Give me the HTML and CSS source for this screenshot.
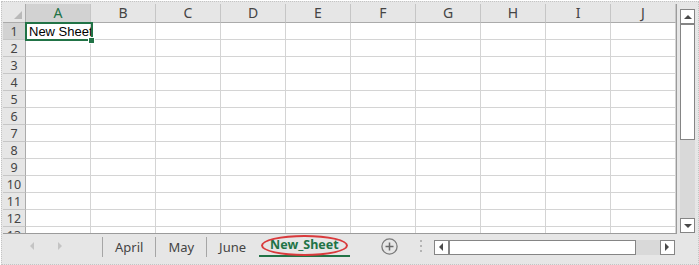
FILE: index.html
```html
<!DOCTYPE html>
<html lang="en">
<head>
  <meta charset="UTF-8">
  <title>New_Sheet</title>
  <link rel="stylesheet" href="styles.css">
</head>
<body>
<div class="frame">
  <div class="main">
    <div class="grid">
      <div class="corner"></div>
      <div class="ch active">A</div><div class="ch">B</div><div class="ch">C</div><div class="ch">D</div><div class="ch">E</div><div class="ch">F</div><div class="ch">G</div><div class="ch">H</div><div class="ch">I</div><div class="ch">J</div>
      <div class="rh active">1</div><div class="c sel">New Sheet</div><div class="c"></div><div class="c"></div><div class="c"></div><div class="c"></div><div class="c"></div><div class="c"></div><div class="c"></div><div class="c"></div><div class="c"></div>
      <div class="rh">2</div><div class="c"></div><div class="c"></div><div class="c"></div><div class="c"></div><div class="c"></div><div class="c"></div><div class="c"></div><div class="c"></div><div class="c"></div><div class="c"></div>
      <div class="rh">3</div><div class="c"></div><div class="c"></div><div class="c"></div><div class="c"></div><div class="c"></div><div class="c"></div><div class="c"></div><div class="c"></div><div class="c"></div><div class="c"></div>
      <div class="rh">4</div><div class="c"></div><div class="c"></div><div class="c"></div><div class="c"></div><div class="c"></div><div class="c"></div><div class="c"></div><div class="c"></div><div class="c"></div><div class="c"></div>
      <div class="rh">5</div><div class="c"></div><div class="c"></div><div class="c"></div><div class="c"></div><div class="c"></div><div class="c"></div><div class="c"></div><div class="c"></div><div class="c"></div><div class="c"></div>
      <div class="rh">6</div><div class="c"></div><div class="c"></div><div class="c"></div><div class="c"></div><div class="c"></div><div class="c"></div><div class="c"></div><div class="c"></div><div class="c"></div><div class="c"></div>
      <div class="rh">7</div><div class="c"></div><div class="c"></div><div class="c"></div><div class="c"></div><div class="c"></div><div class="c"></div><div class="c"></div><div class="c"></div><div class="c"></div><div class="c"></div>
      <div class="rh">8</div><div class="c"></div><div class="c"></div><div class="c"></div><div class="c"></div><div class="c"></div><div class="c"></div><div class="c"></div><div class="c"></div><div class="c"></div><div class="c"></div>
      <div class="rh">9</div><div class="c"></div><div class="c"></div><div class="c"></div><div class="c"></div><div class="c"></div><div class="c"></div><div class="c"></div><div class="c"></div><div class="c"></div><div class="c"></div>
      <div class="rh">10</div><div class="c"></div><div class="c"></div><div class="c"></div><div class="c"></div><div class="c"></div><div class="c"></div><div class="c"></div><div class="c"></div><div class="c"></div><div class="c"></div>
      <div class="rh">11</div><div class="c"></div><div class="c"></div><div class="c"></div><div class="c"></div><div class="c"></div><div class="c"></div><div class="c"></div><div class="c"></div><div class="c"></div><div class="c"></div>
      <div class="rh">12</div><div class="c"></div><div class="c"></div><div class="c"></div><div class="c"></div><div class="c"></div><div class="c"></div><div class="c"></div><div class="c"></div><div class="c"></div><div class="c"></div>
      <div class="rh">13</div><div class="c"></div><div class="c"></div><div class="c"></div><div class="c"></div><div class="c"></div><div class="c"></div><div class="c"></div><div class="c"></div><div class="c"></div><div class="c"></div>
    </div>
    <div class="vscroll">
      <div class="sbtn"><span class="tri up"></span></div>
      <div class="thumb"></div>
      <div class="track"></div>
      <div class="sbtn"><span class="tri down"></span></div>
    </div>
  </div>
  <div class="tabbar">
    <div class="nav"><span class="tri left faint"></span><span class="tri right faint"></span></div>
    <div class="tab">April</div>
    <div class="tab">May</div>
    <div class="tab">June</div>
    <div class="tab current">New_Sheet</div>
    <div class="add">
      <svg width="17" height="17" viewBox="0 0 17 17">
        <circle cx="8.5" cy="8.5" r="7.6" fill="none" stroke="#7a7a7a" stroke-width="1.3"/>
        <path d="M8.5 4.5v8M4.5 8.5h8" stroke="#6a6a6a" stroke-width="1.5"/>
      </svg>
    </div>
    <div class="grip"><i></i><i></i><i></i></div>
    <div class="hscroll">
      <div class="sbtn"><span class="tri left"></span></div>
      <div class="thumb"></div>
      <div class="track"></div>
      <div class="sbtn"><span class="tri right"></span></div>
    </div>
  </div>
</div>
</body>
</html>
```

FILE: styles.css
```css
body {
  margin: 0;
  background-color: #ffffff;
  font-family: "Noto Sans", "Open Sans", sans-serif;
}

.frame {
  margin: 1px;
  width: 695px;
  height: 260px;
  border: 1px dotted #c4c4c4;
  background-color: #e6e6e6;
  padding: 2px 0 0 1px;
  box-sizing: content-box;
}

.main {
  display: flex;
  height: 230px;
}

/* hoja */
.grid {
  display: grid;
  grid-template-columns: 23px repeat(10, 65px);
  grid-template-rows: 19px repeat(13, 17px);
  width: 674px;
  height: 230px;
  background-color: #ffffff;
  border-right: 1px solid #9b9b9b;
  border-bottom: 1px solid #9b9b9b;
  box-sizing: border-box;
  overflow: hidden;
}

.grid > div {
  box-sizing: border-box;
}

.corner {
  position: relative;
  background-color: #e6e6e6;
  border-right: 1px solid #ababab;
  border-bottom: 1px solid #ababab;
}

.corner::after {
  content: "";
  position: absolute;
  right: 3px;
  bottom: 3px;
  border-left: 8px solid transparent;
  border-bottom: 8px solid #b9b9b9;
}

.ch {
  background-color: #e6e6e6;
  border-right: 1px solid #c6c6c6;
  border-bottom: 1px solid #ababab;
  color: #444444;
  font-size: 14px;
  line-height: 18px;
  text-align: center;
}

.rh {
  background-color: #e6e6e6;
  border-right: 1px solid #ababab;
  border-bottom: 1px solid #c6c6c6;
  color: #444444;
  font-size: 12.5px;
  line-height: 17px;
  text-align: center;
}

.ch.active {
  background-color: #d2d2d2;
  color: #217346;
}

.rh.active {
  background-color: #d2d2d2;
}

.c {
  border-right: 1px solid #d4d4d4;
  border-bottom: 1px solid #d4d4d4;
  font-family: "Liberation Sans", Arial, sans-serif;
  font-size: 13px;
  line-height: 17px;
  white-space: nowrap;
}

.sel {
  position: relative;
  padding-left: 3px;
  z-index: 1;
}

.sel::before {
  content: "";
  position: absolute;
  top: -1px;
  left: -1px;
  right: -3px;
  bottom: -2px;
  border: 2px solid #217346;
}

.sel::after {
  content: "";
  position: absolute;
  right: -5px;
  bottom: -5px;
  width: 5px;
  height: 5px;
  background-color: #217346;
  border: 1px solid #ffffff;
}

/* barras de desplazamiento */
.vscroll {
  display: flex;
  flex-direction: column;
  width: 15px;
  height: 224px;
  margin: 5px 0 0 3px;
}

.vscroll .sbtn {
  height: 15px;
}

.vscroll .thumb {
  height: 116px;
}

.vscroll .track {
  flex: 1;
  background-color: #d9d9d9;
}

.sbtn, .thumb {
  display: flex;
  align-items: center;
  justify-content: center;
  background-color: #ffffff;
  border: 1px solid #858585;
  box-sizing: border-box;
}

.tri {
  width: 0;
  height: 0;
}

.tri.up {
  border-left: 4px solid transparent;
  border-right: 4px solid transparent;
  border-bottom: 4px solid #4a4a4a;
}

.tri.down {
  border-left: 4px solid transparent;
  border-right: 4px solid transparent;
  border-top: 4px solid #4a4a4a;
}

.tri.left {
  border-top: 4px solid transparent;
  border-bottom: 4px solid transparent;
  border-right: 4px solid #4a4a4a;
}

.tri.right {
  border-top: 4px solid transparent;
  border-bottom: 4px solid transparent;
  border-left: 4px solid #4a4a4a;
}

.tri.faint.left {
  border-right-color: #c4c4c4;
}

.tri.faint.right {
  border-left-color: #c4c4c4;
}

/* pestañas */
.tabbar {
  display: flex;
  height: 24px;
}

.nav {
  display: flex;
  align-items: center;
  gap: 24px;
  width: 99px;
  padding-left: 27px;
  box-sizing: border-box;
}

.tab {
  display: flex;
  align-items: center;
  margin: 3px 0 1px;
  padding: 0 12px 1px;
  border-left: 1px solid #a6a6a6;
  color: #444444;
  font-size: 13px;
}

.tab.current {
  position: relative;
  margin: 0 0 1px 1px;
  padding: 0 11px;
  border-left: none;
  border-bottom: 2px solid #217346;
  color: #217346;
  font-weight: bold;
  font-size: 12.5px;
}

.tab.current::after {
  content: "";
  position: absolute;
  top: 1px;
  left: 2px;
  right: 2px;
  bottom: -1px;
  border: 2px solid #d93a3c;
  border-radius: 50%;
}

.add {
  display: flex;
  align-items: center;
  margin-left: 31px;
}

.grip {
  display: flex;
  flex-direction: column;
  justify-content: center;
  gap: 3px;
  margin-left: 22px;
}

.grip i {
  width: 2px;
  height: 2px;
  background-color: #b4b4b4;
}

.hscroll {
  display: flex;
  align-self: center;
  height: 15px;
  margin: 2px 0 0 12px;
}

.hscroll .sbtn {
  width: 15px;
}

.hscroll .thumb {
  width: 187px;
}

.hscroll .track {
  width: 24px;
  background-color: #d9d9d9;
}
```
